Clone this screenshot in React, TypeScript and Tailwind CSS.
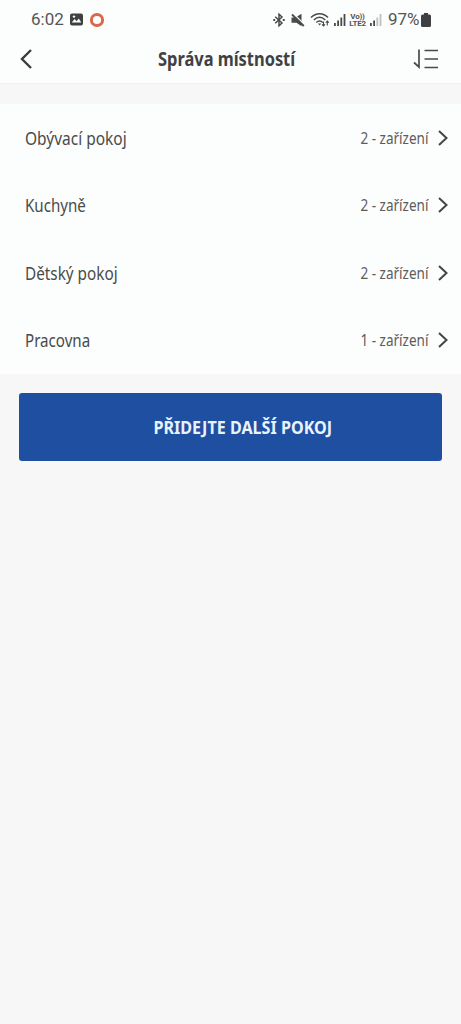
const rooms = [
  { name: "Obývací pokoj", devices: 2, scale: "scale-x-[0.86]" },
  { name: "Kuchyně", devices: 2, scale: "scale-x-[0.84]" },
  { name: "Dětský pokoj", devices: 2, scale: "scale-x-[0.85]" },
  { name: "Pracovna", devices: 1, scale: "scale-x-[0.84]" },
];

const Signal = ({ weak }: { weak?: boolean }) => (
  <svg width="12" height="12" viewBox="0 0 12 12" fill="#4a4a4a">
    <rect x="0" y="9" width="1.8" height="3" />
    <rect x="3.2" y="6.5" width="1.8" height="5.5" />
    <rect x="6.4" y="3.5" width="1.8" height="8.5" opacity={weak ? 0.35 : 1} />
    <rect x="9.6" y="0" width="1.8" height="12" opacity={weak ? 0.35 : 1} />
  </svg>
);

const StatusBar = () => (
  <div className="flex h-[38px] items-center pt-px pr-[30px] pl-[31px] font-[Roboto,sans-serif] text-[17px] text-[#555]">
    <span className="w-[39px]">6:02</span>
    <svg width="13" height="13" viewBox="0 0 13 13">
      <rect y="0.5" width="13" height="12" rx="2" fill="#3e4042" />
      <path d="M1.800 9.400 4.600 6l2 2.200 2.100-2.800 2.600 4z" fill="#fcfcfc" />
      <circle cx="4" cy="3.600" r="1.200" fill="#fcfcfc" />
    </svg>
    <svg className="ml-1.5" width="16" height="16" viewBox="0 0 16 16">
      <circle cx="8" cy="8" r="5.600" fill="none" stroke="#d9694a" strokeWidth="3" />
    </svg>
    <div className="ml-auto flex items-center">
      <svg width="12" height="14" viewBox="0 0 12 14" fill="none" stroke="#4a4a4a" strokeWidth="1.500">
        <path d="M2.200 3.800 9 10 6 12.800V1.200L9 4 2.200 10.200" />
        <path d="M.3 7h1.900M9.800 7h1.900" strokeWidth="1.800" />
      </svg>
      <svg className="ml-[6px]" width="14" height="14" viewBox="0 0 14 14" fill="#4a4a4a">
        <path d="M.5 4.500h4L10.500.8v12.400L5.500 9.800h-5z" />
        <path d="M2 .2 13.800 12" stroke="#fcfcfc" strokeWidth="1.300" />
        <path d="m1 1.500 11.800 11.500" stroke="#4a4a4a" strokeWidth="1.800" />
      </svg>
      <svg className="ml-[5px]" width="21" height="16" viewBox="0 0 21 16" fill="none" stroke="#4a4a4a" strokeWidth="1.500">
        <path d="M1 5.500c5-5 12.200-5 17 0M3.800 8c3.600-3.300 8-3.300 11.500 0M6.300 10.500c2-1.800 4.600-1.800 6.500 0" />
        <path d="M8 11.600 9.600 13.400 11.200 11.600z" fill="#4a4a4a" stroke="none" />
        <path d="M13.500 9.500v4.500m-1.500-1.600 1.500 1.600 1.500-1.600M17.300 13.500V9m-1.500 1.600L17.300 9l1.500 1.600" strokeWidth="1.100" />
      </svg>
      <div className="ml-[3px]"><Signal /></div>
      <div className="ml-[2px] flex w-[19px] flex-col items-center text-[8px] leading-[7px] font-bold tracking-[-0.2px]">
        <span>Vo))</span>
        <span>LTE2</span>
      </div>
      <div className="ml-[3px]"><Signal weak /></div>
      <span className="ml-[6px] w-[33px] origin-left">97%</span>
      <svg width="10" height="14" viewBox="0 0 10 14" fill="#3e4042">
        <path d="M3 0h4v1.500h1.500q1.500 0 1.500 1.500v9.500q0 1.500-1.500 1.500h-7Q0 14 0 12.500V3q0-1.500 1.500-1.500H3z" />
      </svg>
    </div>
  </div>
);

const Header = () => (
  <header className="flex h-[46px] items-center justify-between border-b border-[#f1f1f1] pr-[22px] pb-[4px] pl-[20px]">
    <button aria-label="Zpět" className="w-[26px]">
      <svg width="13" height="20" viewBox="0 0 13 20" fill="none" stroke="#3c3c3c" strokeWidth="2.400">
        <path d="M11 1 2 10l9 9" />
      </svg>
    </button>
    <h1 className="mr-[6px] flex w-[137px] justify-center text-xl font-bold whitespace-nowrap text-[#3f4143]">
      <span className="scale-x-[0.82]">Správa místností</span>
    </h1>
    <button aria-label="Seřadit">
      <svg width="26" height="20" viewBox="0 0 26 20" fill="none" stroke="#4a4a4a" strokeWidth="1.700">
        <path d="M6 .5v17.500L1 13.500M11.500 1.500H25M11.500 10H25M11.500 18.500H25" />
      </svg>
    </button>
  </header>
);

const App = () => {
  return (
    <div className="min-h-screen bg-[#f7f7f7] font-['Noto_Sans',sans-serif]">
      <div className="bg-[#fcfdfd]">
        <StatusBar />
        <Header />
      </div>
      <ul className="mt-5 bg-[#fcfdfd]">
        {rooms.map((room) => (
          <li key={room.name} className="flex h-[67.5px] items-center pr-[13px] pl-[25px]">
            <span className={`origin-left text-lg text-[#494b4b] ${room.scale}`}>{room.name}</span>
            <span className="ml-auto origin-right scale-x-[0.845] text-base text-[#5c5c5c]">
              {room.devices} - zařízení
            </span>
            <svg className="ml-[10px]" width="10" height="16" viewBox="0 0 10 16" fill="none" stroke="#454545" strokeWidth="2">
              <path d="m1 1 7.500 7L1 15" />
            </svg>
          </li>
        ))}
      </ul>
      <div className="px-[19px] pt-[19px]">
        <button className="flex h-[68px] w-full items-center justify-center rounded-[3px] bg-[#1f4fa1] pl-[25px] text-[18px] font-bold whitespace-nowrap text-[#e9f3fd]">
          <span className="scale-x-[0.895]">PŘIDEJTE DALŠÍ POKOJ</span>
        </button>
      </div>
    </div>
  );
};

export default App;
